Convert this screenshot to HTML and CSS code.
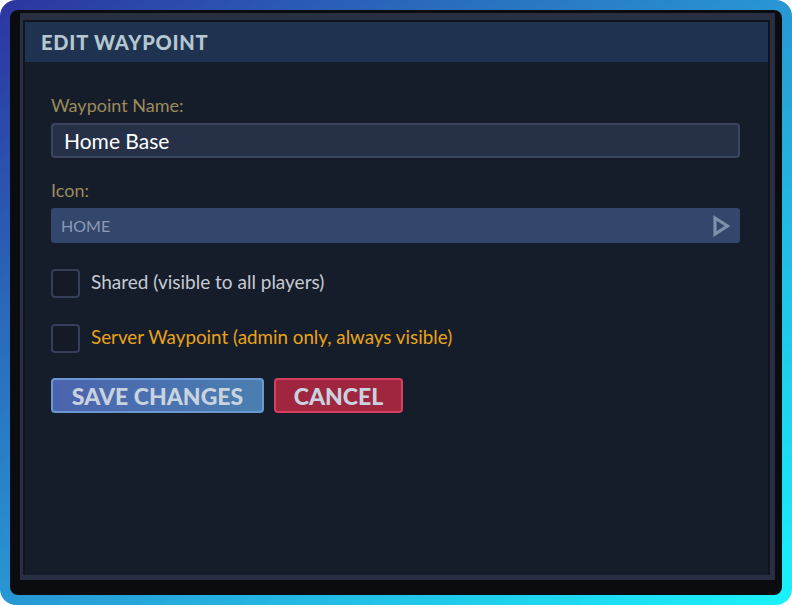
FILE: index.html
```html
<!DOCTYPE html>
<html>
<head>
    <link rel="stylesheet" href="styles.css">
</head>
<body>
    <div class="screen">
        <div class="frame">
            <div class="panel">
                <div class="panel-inner">
                    <div class="header">
                        <h1>Edit Waypoint</h1>
                    </div>
                    <div class="content">
                        <label class="field-label">Waypoint Name:</label>
                        <div class="text-input">Home Base</div>

                        <label class="field-label icon-label">Icon:</label>
                        <div class="select">
                            <span>HOME</span>
                            <svg class="select-arrow" width="18" height="22" viewBox="0 0 18 22">
                                <polygon points="3,3 15.5,11 3,19" fill="none" stroke="#7e91ab" stroke-width="3.2" stroke-linejoin="miter"/>
                            </svg>
                        </div>

                        <div class="check-row">
                            <div class="checkbox"></div>
                            <span class="check-text">Shared (visible to all players)</span>
                        </div>
                        <div class="check-row">
                            <div class="checkbox"></div>
                            <span class="check-text admin">Server Waypoint (admin only, always visible)</span>
                        </div>

                        <div class="buttons">
                            <button class="btn btn-save">SAVE CHANGES</button>
                            <button class="btn btn-cancel">CANCEL</button>
                        </div>
                    </div>
                </div>
            </div>
        </div>
    </div>
</body>
</html>
```

FILE: styles.css
```css
body {
    margin: 0;
    background-color: #ffffff;
    font-family: "Lato", "Open Sans", sans-serif;
}

.screen {
    width: 792px;
    height: 605px;
    box-sizing: border-box;
    padding: 10px;
    border-radius: 16px;
    background: linear-gradient(to bottom right, #2c35a0 0%, #2897d4 50%, #19f3fb 100%);
}

.frame {
    height: 100%;
    box-sizing: border-box;
    padding: 3px 7px 15px 10px;
    background-color: #0a0c10;
    border-radius: 8px;
}

.panel {
    height: 100%;
    box-sizing: border-box;
    border-style: solid;
    border-color: #282f42;
    border-width: 7px 5px 5px 3px;
}

.panel-inner {
    height: 100%;
    box-sizing: border-box;
    border: 2px solid #10141c;
    border-bottom-width: 0;
    background-color: #161d2a;
    display: flex;
    flex-direction: column;
}

.header {
    height: 40px;
    background-color: #1f3350;
    display: flex;
    align-items: center;
    padding-left: 16px;
}

.header h1 {
    margin: 0;
    font-size: 20px;
    font-weight: 900;
    letter-spacing: 0.8px;
    text-transform: uppercase;
    color: #b5c7d1;
}

.content {
    padding: 33px 28px 0 26px;
    display: flex;
    flex-direction: column;
}

.field-label {
    font-size: 18px;
    line-height: 20px;
    color: #9d8b5a;
}

.icon-label {
    margin-top: 22px;
}

.text-input {
    margin-top: 8px;
    height: 35px;
    box-sizing: border-box;
    border: 2px solid #3a4560;
    border-radius: 4px;
    background-color: #263047;
    color: #ffffff;
    font-size: 21px;
    padding-left: 11px;
    display: flex;
    align-items: center;
}

.select {
    margin-top: 8px;
    height: 35px;
    box-sizing: border-box;
    border-radius: 3px;
    background-color: #33466b;
    color: #8b9bb7;
    font-size: 16px;
    padding: 0 10px;
    display: flex;
    align-items: center;
    justify-content: space-between;
}

.check-row {
    margin-top: 26px;
    display: flex;
    align-items: center;
    gap: 11px;
}

.checkbox {
    width: 29px;
    height: 29px;
    box-sizing: border-box;
    border: 2px solid #363f59;
    border-radius: 4px;
    background-color: #151a29;
}

.check-text {
    font-size: 19px;
    color: #c6cad3;
    margin-top: -4px;
}

.check-text.admin {
    font-size: 18.8px;
    color: #e9a316;
}

.buttons {
    margin-top: 25px;
    display: flex;
    gap: 10px;
}

.btn {
    height: 35px;
    box-sizing: border-box;
    border-radius: 4px;
    font-family: "Lato", sans-serif;
    font-size: 23px;
    font-weight: 900;
    color: #c9d3df;
    padding: 0;
    cursor: pointer;
}

.btn-save {
    width: 213px;
    background: linear-gradient(to right, #4b63ae, #4a7fb1);
    border: 2px solid #6c98d2;
}

.btn-cancel {
    width: 129px;
    background-color: #a0263f;
    border: 2px solid #d6405e;
}
```
